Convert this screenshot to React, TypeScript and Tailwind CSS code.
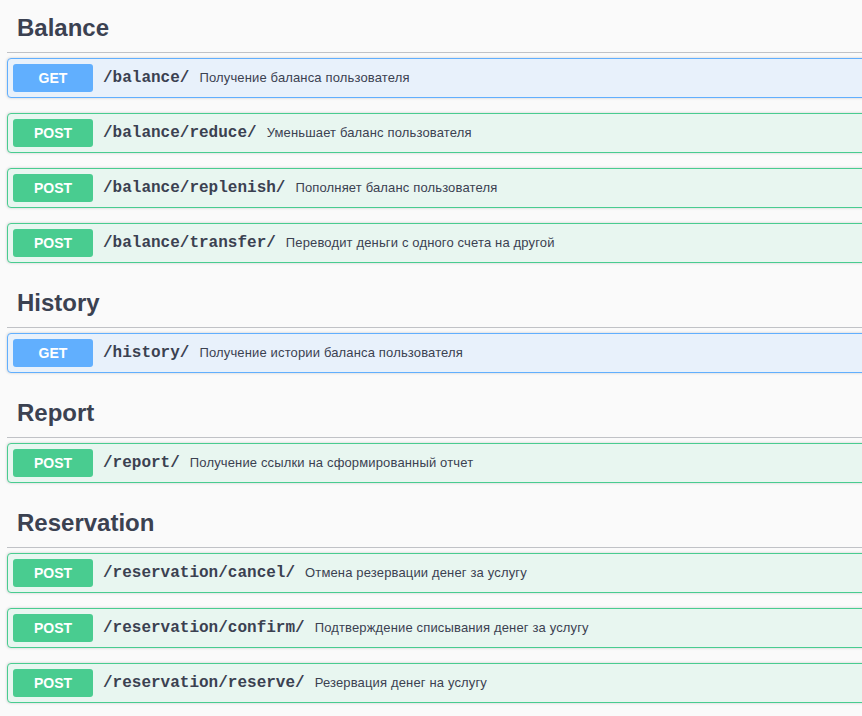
const sections = [
  {
    tag: "Balance",
    ops: [
      { method: "GET", path: "/balance/", summary: "Получение баланса пользователя" },
      { method: "POST", path: "/balance/reduce/", summary: "Уменьшает баланс пользователя" },
      { method: "POST", path: "/balance/replenish/", summary: "Пополняет баланс пользователя" },
      { method: "POST", path: "/balance/transfer/", summary: "Переводит деньги с одного счета на другой" },
    ],
  },
  {
    tag: "History",
    ops: [{ method: "GET", path: "/history/", summary: "Получение истории баланса пользователя" }],
  },
  {
    tag: "Report",
    ops: [{ method: "POST", path: "/report/", summary: "Получение ссылки на сформированный отчет" }],
  },
  {
    tag: "Reservation",
    ops: [
      { method: "POST", path: "/reservation/cancel/", summary: "Отмена резервации денег за услугу" },
      { method: "POST", path: "/reservation/confirm/", summary: "Подтверждение списывания денег за услугу" },
      { method: "POST", path: "/reservation/reserve/", summary: "Резервация денег на услугу" },
    ],
  },
];

function Operation({ method, path, summary }: { method: string; path: string; summary: string }) {
  const isGet = method === "GET";
  return (
    <div
      className={
        isGet
          ? "mb-[15px] flex items-center rounded-[4px] border border-[#61affe] bg-[#e8f1fb] p-[5px] shadow-[0_0_3px_rgba(0,0,0,0.19)]"
          : "mb-[15px] flex items-center rounded-[4px] border border-[#49cc90] bg-[#e8f6f0] p-[5px] shadow-[0_0_3px_rgba(0,0,0,0.19)]"
      }
    >
      <span
        className={
          isGet
            ? "min-w-[80px] rounded-[3px] bg-[#61affe] py-[6px] text-center text-[14px] leading-[16px] font-bold text-white"
            : "min-w-[80px] rounded-[3px] bg-[#49cc90] py-[6px] text-center text-[14px] leading-[16px] font-bold text-white"
        }
      >
        {method}
      </span>
      <span className="px-[10px] font-['Liberation_Mono',monospace] text-[16px] font-bold text-[#3b4151]">
        {path}
      </span>
      <span className="text-[13px] tracking-[0.15px] text-[#3b4151]">{summary}</span>
    </div>
  );
}

export default function App() {
  return (
    <div className="min-h-screen overflow-hidden bg-[#fafafa] pt-[3px] font-['Liberation_Sans',Arial,sans-serif]">
      <div className="ml-[7px] w-[900px]">
        {sections.map((s) => (
          <section key={s.tag}>
            <h3 className="mb-[5px] border-b border-[rgba(59,65,81,0.3)] py-[10px] pr-[20px] pl-[10px] text-[24px] leading-[29px] font-bold text-[#3b4151]">
              {s.tag}
            </h3>
            {s.ops.map((op) => (
              <Operation key={op.path} {...op} />
            ))}
          </section>
        ))}
      </div>
    </div>
  );
}
